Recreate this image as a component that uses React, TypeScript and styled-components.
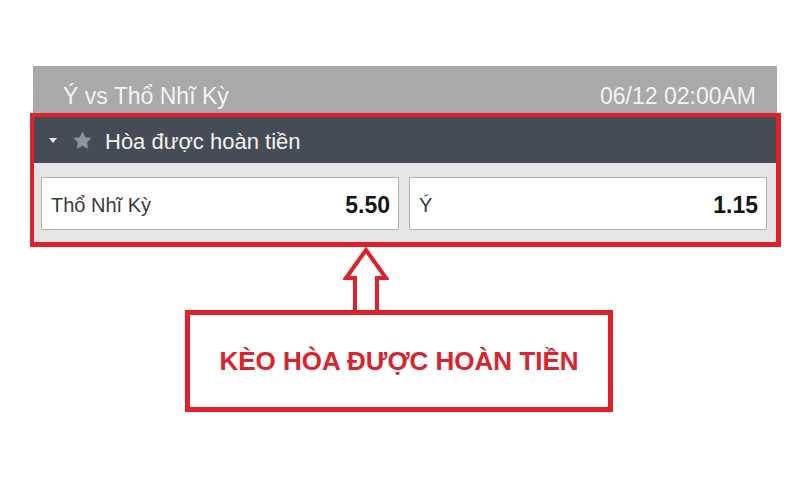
import styled, { createGlobalStyle } from 'styled-components';

const RED = '#e0202b';

const GlobalStyle = createGlobalStyle`
  body {
    margin: 0;
    background: #ffffff;
    font-family: "Liberation Sans", Arial, sans-serif;
  }
`;

type Odd = { label: string; price: string };

const odds: Odd[] = [
  { label: 'Thổ Nhĩ Kỳ', price: '5.50' },
  { label: 'Ý', price: '1.15' },
];

export default function App() {
  return (
    <Page>
      <GlobalStyle />
      <MatchHeader>
        <span>Ý vs Thổ Nhĩ Kỳ</span>
        <span>06/12 02:00AM</span>
      </MatchHeader>

      <MarketBox>
        <MarketBar>
          <Caret />
          <Star viewBox="0 0 24 24">
            <path d="M12 1.6l3.2 6.6 7.2 1-5.2 5.1 1.2 7.2L12 18.1l-6.4 3.4 1.2-7.2L1.6 9.2l7.2-1z" />
          </Star>
          <MarketTitle>Hòa được hoàn tiền</MarketTitle>
        </MarketBar>
        <OddsRow>
          {odds.map((odd) => (
            <OddCell key={odd.label}>
              <OddLabel>{odd.label}</OddLabel>
              <OddPrice>{odd.price}</OddPrice>
            </OddCell>
          ))}
        </OddsRow>
      </MarketBox>

      <Annotation>
        <Arrow viewBox="0 0 46 63">
          <path d="M23 3 L43 31 L34 31 L34 66 L12 66 L12 31 L3 31 Z" />
        </Arrow>
        <Callout>KÈO HÒA ĐƯỢC HOÀN TIỀN</Callout>
      </Annotation>
    </Page>
  );
}

const Page = styled.div`
  width: 751px;
  padding: 66px 0 0 30px;
`;

const MatchHeader = styled.div`
  display: flex;
  justify-content: space-between;
  align-items: flex-end;
  height: 47px;
  box-sizing: border-box;
  margin: 0 4px 0 3px;
  padding: 0 21px 4px 30px;
  background: #a9a9a9;
  color: #f3f3f3;
  font-size: 23px;
  line-height: 26px;
`;

const MarketBox = styled.div`
  border: 4px solid ${RED};
  border-right-width: 5px;
  border-bottom-width: 5px;
`;

const MarketBar = styled.div`
  display: flex;
  align-items: center;
  height: 46px;
  padding: 4px 0 0 15px;
  box-sizing: border-box;
  background: #464c56;
`;

const Caret = styled.span`
  width: 0;
  height: 0;
  border-left: 4px solid transparent;
  border-right: 4px solid transparent;
  border-top: 5px solid #eef0f2;
  margin: -4px 15px 0 0;
`;

const Star = styled.svg`
  width: 21px;
  height: 21px;
  fill: #8d929c;
  margin: -4px 12px 0 0;
`;

const MarketTitle = styled.span`
  color: #f2f2f2;
  font-size: 22px;
  line-height: 26px;
`;

const OddsRow = styled.div`
  display: flex;
  gap: 10px;
  padding: 14px 9px 12px 7px;
  background: #e5e5e5;
`;

const OddCell = styled.div`
  flex: 1;
  display: flex;
  justify-content: space-between;
  align-items: center;
  height: 53px;
  box-sizing: border-box;
  padding: 4px 8px 0 9px;
  background: #ffffff;
  border: 1px solid #b3b3b3;
`;

const OddLabel = styled.span`
  color: #3a3a3a;
  font-size: 20px;
`;

const OddPrice = styled.span`
  color: #141414;
  font-size: 23px;
  font-weight: bold;
`;

const Annotation = styled.div`
  display: flex;
  flex-direction: column;
  align-items: flex-start;
  padding-left: 155px;
`;

const Arrow = styled.svg`
  display: block;
  width: 46px;
  height: 63px;
  margin-left: 158px;
  fill: #ffffff;
  stroke: ${RED};
  stroke-width: 4;
  stroke-linejoin: miter;
`;

const Callout = styled.div`
  display: flex;
  justify-content: center;
  align-items: center;
  width: 428px;
  height: 102px;
  box-sizing: border-box;
  border: 5px solid ${RED};
  color: #d9232d;
  font-size: 26px;
  font-weight: bold;
`;
